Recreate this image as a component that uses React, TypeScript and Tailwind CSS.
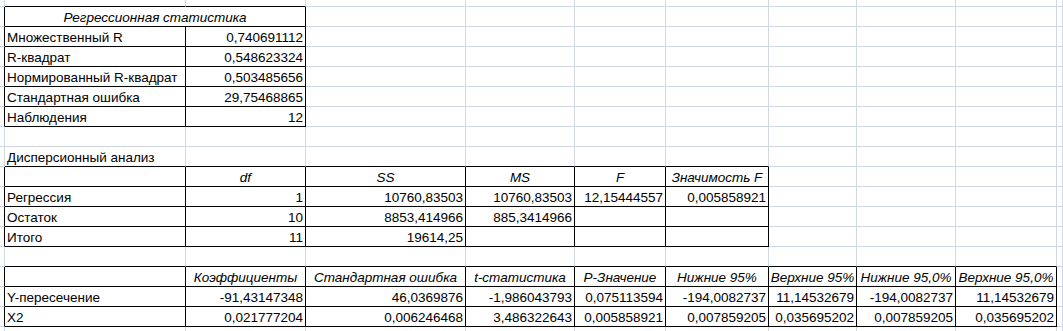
// Excel regression output sheet
// Grid of cells with light gridlines; tables get black borders

type Cell = { t: string; a?: 'l' | 'r' | 'c'; i?: boolean; span?: number }

const ROWS = 18
const COLS = 11

// table areas: [rowFrom, rowTo, colFrom, colTo]
const tables: [number, number, number, number][] = [
  [1, 6, 1, 2],
  [9, 12, 1, 6],
  [14, 16, 1, 9],
]

const inTable = (r: number, c: number) =>
  tables.some(([r0, r1, c0, c1]) => r >= r0 && r <= r1 && c >= c0 && c <= c1)

const L = (t: string): Cell => ({ t, a: 'l' })
const R = (t: string): Cell => ({ t, a: 'r' })
const H = (t: string): Cell => ({ t, a: 'c', i: true })

const data: Record<number, Record<number, Cell>> = {
  1: { 1: { t: 'Регрессионная статистика', a: 'c', i: true, span: 2 } },
  2: { 1: L('Множественный R'), 2: R('0,740691112') },
  3: { 1: L('R-квадрат'), 2: R('0,548623324') },
  4: { 1: L('Нормированный R-квадрат'), 2: R('0,503485656') },
  5: { 1: L('Стандартная ошибка'), 2: R('29,75468865') },
  6: { 1: L('Наблюдения'), 2: R('12') },
  8: { 1: L('Дисперсионный анализ') },
  9: { 2: H('df'), 3: H('SS'), 4: H('MS'), 5: H('F'), 6: H('Значимость F') },
  10: {
    1: L('Регрессия'),
    2: R('1'),
    3: R('10760,83503'),
    4: R('10760,83503'),
    5: R('12,15444557'),
    6: R('0,005858921'),
  },
  11: { 1: L('Остаток'), 2: R('10'), 3: R('8853,414966'), 4: R('885,3414966') },
  12: { 1: L('Итого'), 2: R('11'), 3: R('19614,25') },
  14: {
    2: H('Коэффициенты'),
    3: H('Стандартная ошибка'),
    4: H('t-статистика'),
    5: H('P-Значение'),
    6: H('Нижние 95%'),
    7: H('Верхние 95%'),
    8: H('Нижние 95,0%'),
    9: H('Верхние 95,0%'),
  },
  15: {
    1: L('Y-пересечение'),
    2: R('-91,43147348'),
    3: R('46,0369876'),
    4: R('-1,986043793'),
    5: R('0,075113594'),
    6: R('-194,0082737'),
    7: R('11,14532679'),
    8: R('-194,0082737'),
    9: R('11,14532679'),
  },
  16: {
    1: L('X2'),
    2: R('0,021777204'),
    3: R('0,006246468'),
    4: R('3,486322643'),
    5: R('0,005858921'),
    6: R('0,007859205'),
    7: R('0,035695202'),
    8: R('0,007859205'),
    9: R('0,035695202'),
  },
}

const alignCls = {
  l: 'justify-start pl-[2px]',
  r: 'justify-end pr-[2px]',
  c: 'justify-center',
}

export default function App() {
  const cells: React.ReactNode[] = []

  for (let r = 0; r < ROWS; r++) {
    for (let c = 0; c < COLS; c++) {
      // skip the cell covered by the merged title
      if (r === 1 && c === 2) continue
      const cell = data[r]?.[c]
      const span = cell?.span ?? 1
      const last = c + span - 1
      const rightBlack = inTable(r, last) || inTable(r, last + 1)
      const bottomBlack = inTable(r, c) || inTable(r + 1, c)

      cells.push(
        <div
          key={`${r}-${c}`}
          style={span > 1 ? { gridColumn: `span ${span}` } : undefined}
          className={`flex items-end overflow-hidden whitespace-nowrap border-r border-b leading-[16px] ${
            rightBlack ? 'border-r-black' : 'border-r-[#d0d7e5]'
          } ${bottomBlack ? 'border-b-black' : 'border-b-[#d0d7e5]'} ${
            cell ? alignCls[cell.a ?? 'l'] : ''
          } ${cell?.i ? 'italic' : ''}`}
        >
          {cell?.t}
        </div>
      )
    }
  }

  return (
    <div className="h-[331px] w-[1063px] overflow-hidden bg-white text-[13.5px] text-black font-['Liberation_Sans',Arial,sans-serif]">
      <div className="grid grid-cols-[5px_181px_120px_160px_109px_91px_103px_88px_99px_101px_1fr] grid-rows-[7px_repeat(17,20px)]">
        {cells}
      </div>
    </div>
  )
}
